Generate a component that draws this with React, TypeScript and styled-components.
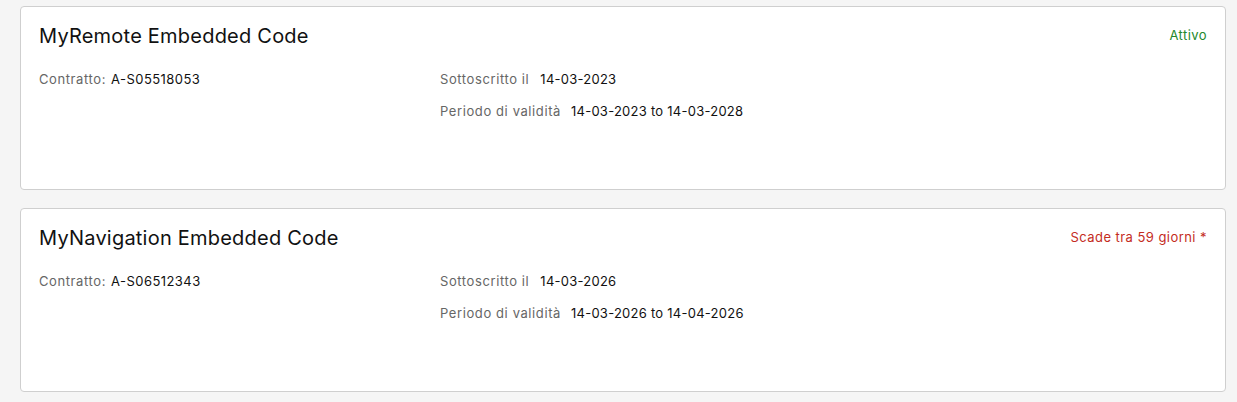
import React from "react";
import styled, { createGlobalStyle } from "styled-components";

const Global = createGlobalStyle`
  html, body { margin: 0; padding: 0; background: #f5f5f5; }
  body { font-family: Inter, "Noto Sans", Arial, sans-serif; color: #1a1a1a; }
`;

const Page = styled.div`
  display: flex;
  flex-direction: column;
  gap: 18px;
  padding: 6px 11px 10px 20px;
`;

const Card = styled.section`
  background: #fff;
  border: 1px solid #cfcfcf;
  border-radius: 4px;
  height: 184px;
  box-sizing: border-box;
  padding: 17px 18px;
`;

const Header = styled.div`
  display: flex;
  justify-content: space-between;
  align-items: flex-start;
`;

const Title = styled.h2`
  margin: 0;
  font-size: 20px;
  line-height: 24px;
  font-weight: 400;
  letter-spacing: 0.22px;
  color: #111;
`;

const Status = styled.span<{ $tone: "ok" | "warn" }>`
  font-size: 13px;
  line-height: 20px;
  margin-top: 1px;
  letter-spacing: 0.45px;
  color: ${(p) => (p.$tone === "ok" ? "#24882c" : "#c42c1e")};
`;

const Body = styled.div`
  display: grid;
  grid-template-columns: 401px 1fr;
  margin-top: 21px;
`;

const Column = styled.div`
  display: flex;
  flex-direction: column;
  gap: 12px;
`;

const Field = styled.div<{ $gap: number }>`
  display: flex;
  gap: ${(p) => p.$gap}px;
  font-size: 13px;
  line-height: 20px;
`;

const Label = styled.span`
  color: #666;
  letter-spacing: 0.6px;
`;

const Value = styled.span<{ $wide?: boolean }>`
  color: #111;
  letter-spacing: ${(p) => (p.$wide ? "0.45px" : "0.25px")};
`;

type Item = {
  title: string;
  status: string;
  tone: "ok" | "warn";
  contract: string;
  signed: string;
  from: string;
  to: string;
};

const items: Item[] = [
  {
    title: "MyRemote Embedded Code",
    status: "Attivo",
    tone: "ok",
    contract: "A-S05518053",
    signed: "14-03-2023",
    from: "14-03-2023",
    to: "14-03-2028",
  },
  {
    title: "MyNavigation Embedded Code",
    status: "Scade tra 59 giorni *",
    tone: "warn",
    contract: "A-S06512343",
    signed: "14-03-2026",
    from: "14-03-2026",
    to: "14-04-2026",
  },
];

export default function App() {
  return (
    <>
      <Global />
      <Page>
        {items.map((it) => (
          <Card key={it.contract}>
            <Header>
              <Title>{it.title}</Title>
              <Status $tone={it.tone}>{it.status}</Status>
            </Header>
            <Body>
              <Column>
                <Field $gap={5}>
                  <Label>Contratto:</Label>
                  <Value $wide>{it.contract}</Value>
                </Field>
              </Column>
              <Column>
                <Field $gap={11}>
                  <Label>Sottoscritto il</Label>
                  <Value>{it.signed}</Value>
                </Field>
                <Field $gap={10}>
                  <Label>Periodo di validità</Label>
                  <Value>
                    {it.from} to {it.to}
                  </Value>
                </Field>
              </Column>
            </Body>
          </Card>
        ))}
      </Page>
    </>
  );
}
